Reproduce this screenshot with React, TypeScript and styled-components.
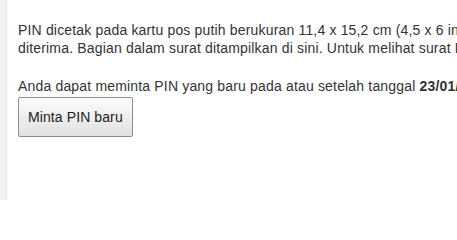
import React from "react";
import styled, { createGlobalStyle } from "styled-components";

const Global = createGlobalStyle`
  html, body { margin: 0; padding: 0; background: #fff; }
  body { font-family: "Liberation Sans", Arial, sans-serif; overflow: hidden; }
`;

const Page = styled.div`
  display: flex;
  width: 457px;
  height: 200px;
  overflow: hidden;
`;

const SideStrip = styled.div`
  flex: 0 0 6px;
  background: #f1f1f1;
  border-right: 1px solid #e6e6e6;
`;

const Content = styled.main`
  flex: 1 0 auto;
  padding: 21px 0 0 11px;
  color: #333;
  font-size: 14px;
  line-height: 18px;
  letter-spacing: 0.17px;
`;

const Paragraph = styled.p<{ $gap: number }>`
  margin: 0 0 ${(p) => p.$gap}px;
  white-space: nowrap;
`;

const Line = styled.span`
  display: block;
`;

const Button = styled.button`
  display: block;
  font-family: "Liberation Sans", Arial, sans-serif;
  font-size: 14px;
  letter-spacing: 0.1px;
  color: #222;
  height: 40px;
  padding: 0 9px;
  border: 1px solid #8c8c8c;
  border-radius: 2px;
  background: linear-gradient(#fcfcfc, #e1e1e1);
`;

export default function App() {
  return (
    <>
      <Global />
      <Page>
        <SideStrip />
        <Content>
          <Paragraph $gap={20}>
            <Line>PIN dicetak pada kartu pos putih berukuran 11,4 x 15,2 cm (4,5 x 6 inci) dan dikirim dalam amplop tertutup</Line>
            <Line>diterima. Bagian dalam surat ditampilkan di sini. Untuk melihat surat PIN lengkap, klik tautan di bawah.</Line>
          </Paragraph>
          <Paragraph $gap={2}>
            Anda dapat meminta PIN yang baru pada atau setelah tanggal <b>23/01/2015</b>.
          </Paragraph>
          <Button>Minta PIN baru</Button>
        </Content>
      </Page>
    </>
  );
}
